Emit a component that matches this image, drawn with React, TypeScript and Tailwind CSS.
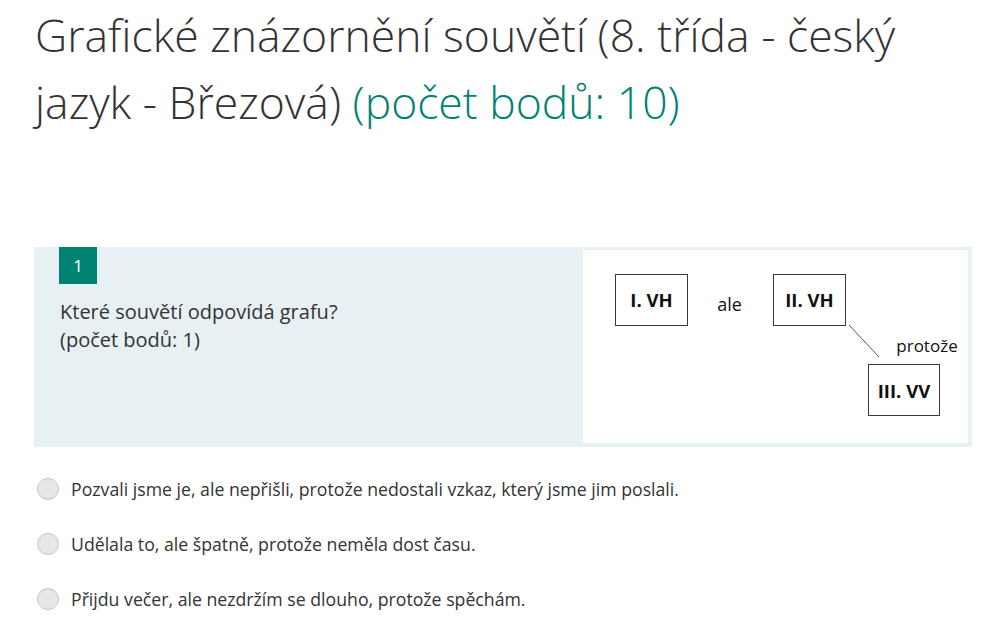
import React from 'react';

const options = [
  'Pozvali jsme je, ale nepřišli, protože nedostali vzkaz, který jsme jim poslali.',
  'Udělala to, ale špatně, protože neměla dost času.',
  'Přijdu večer, ale nezdržím se dlouho, protože spěchám.',
];

// Diagram picture on the right side of the question
const Diagram: React.FC = () => (
  <svg width="385" height="193" viewBox="0 0 385 193" className="block">
    <g fill="none" stroke="#3a3a3a" strokeWidth="1">
      <rect x="32.5" y="24.5" width="72" height="51" />
      <rect x="190.5" y="24.5" width="72" height="51" />
      <rect x="285.5" y="114.5" width="71" height="51" />
    </g>
    <line x1="266" y1="75" x2="296" y2="107" stroke="#555" strokeWidth="1" />
    <g fontFamily="'Open Sans', 'Liberation Sans', sans-serif" fill="#111" textAnchor="middle">
      <text x="68.5" y="57" fontSize="18.5" fontWeight="700">I. VH</text>
      <text x="226.5" y="57" fontSize="18.5" fontWeight="700">II. VH</text>
      <text x="321" y="147.5" fontSize="18.5" fontWeight="700">III. VV</text>
      <text x="146.5" y="61" fontSize="18">ale</text>
      <text x="344" y="102" fontSize="17">protože</text>
    </g>
  </svg>
);

const App: React.FC = () => {
  return (
    <div className="min-h-screen w-full bg-white text-[#333333] font-['Open_Sans','Liberation_Sans',sans-serif]">
      <h1 className="pl-[35px] pt-[1px] w-[930px] text-[44.5px] leading-[67px] font-light text-[#333333]">
        Grafické znázornění souvětí (8. třída - český jazyk - Březová){' '}
        <span className="text-[#008272]">(počet bodů: 10)</span>
      </h1>

      <div className="mt-[112px] ml-[34px] w-[938px] h-[200px] bg-[#e7f0f2] flex">
        <div className="w-[549px] pl-[25px]">
          <div className="w-[38px] h-[37px] bg-[#008272] text-white text-[17px] flex items-center justify-center">
            1
          </div>
          <div className="mt-[14px] pl-px text-[20px] leading-[28px] text-[#333333]">
            <div>Které souvětí odpovídá grafu?</div>
            <div>(počet bodů: 1)</div>
          </div>
        </div>
        <div className="mt-[3px] bg-white w-[385px] h-[193px]">
          <Diagram />
        </div>
      </div>

      <div className="mt-[31px] ml-[37px] flex flex-col gap-[33px]">
        {options.map((text) => (
          <label key={text} className="flex items-center gap-[12px] h-[22px]">
            <span className="w-[22px] h-[22px] rounded-full bg-[#e6e6e6] border border-[#c6c6c6] shrink-0" />
            <span className="text-[17.7px] text-[#333333]">{text}</span>
          </label>
        ))}
      </div>
    </div>
  );
};

export default App;
